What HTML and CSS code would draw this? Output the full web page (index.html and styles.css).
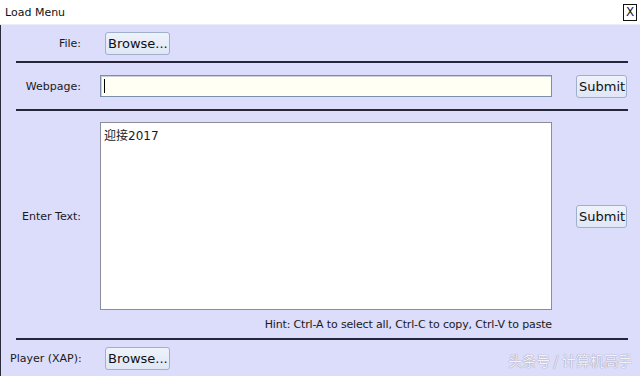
FILE: index.html
```html
<!DOCTYPE html>
<html lang="en">
<head>
    <meta charset="UTF-8">
    <title>Load Menu</title>
    <link rel="stylesheet" href="styles.css">
</head>
<body>
    <div class="window">
        <div class="title-bar">
            <span class="title">Load Menu</span>
            <span class="close-btn">X</span>
        </div>
        <div class="menu-body">
            <div class="row row-file">
                <label class="row-label">File:</label>
                <div class="row-field"><button class="btn browse">Browse...</button></div>
            </div>
            <div class="sep"></div>
            <div class="row row-web">
                <label class="row-label">Webpage:</label>
                <div class="row-field"><div class="text-field"><span class="caret"></span></div></div>
                <div class="row-action"><button class="btn">Submit</button></div>
            </div>
            <div class="sep"></div>
            <div class="row row-text">
                <label class="row-label">Enter Text:</label>
                <div class="row-field"><div class="text-area">迎接2017</div></div>
                <div class="row-action"><button class="btn">Submit</button></div>
                <div class="hint">Hint: Ctrl-A to select all, Ctrl-C to copy, Ctrl-V to paste</div>
            </div>
            <div class="sep"></div>
            <div class="row row-player">
                <label class="row-label left">Player (XAP):</label>
                <div class="row-field"><button class="btn browse">Browse...</button></div>
            </div>
            <div class="watermark">头条号 / 计算机高手</div>
        </div>
    </div>
</body>
</html>
```

FILE: styles.css
```css
body {
    margin: 0;
    font-family: "DejaVu Sans", Verdana, "Noto Sans CJK SC", sans-serif;
    font-size: 12px;
    color: #1a1a1a;
    background-color: #fff;
}
.window {
    width: 640px;
    height: 376px;
    display: flex;
    flex-direction: column;
    overflow: hidden;
}
.title-bar {
    flex-shrink: 0;
    height: 24px;
    background-color: #fff;
    border-bottom: 1px solid #ececf6;
    display: flex;
    align-items: center;
    justify-content: space-between;
    padding: 0 3px 0 5px;
}
.title {
    font-size: 11px;
    color: #111;
}
.close-btn {
    width: 12px;
    height: 15px;
    border: 1px solid #111;
    font-size: 12px;
    line-height: 15px;
    text-align: center;
    margin-top: 1px;
}
.menu-body {
    flex: 1;
    position: relative;
    background-color: #dcdcfb;
    border-left: 1px solid #2a2a3a;
}
.row {
    display: grid;
    grid-template-columns: 99px 452px 1fr;
    align-items: center;
}
.row-label {
    text-align: right;
    padding-right: 19px;
    font-size: 11px;
}
.row-label.left {
    text-align: left;
    padding-left: 9px;
    padding-right: 0;
}
.row-file {
    height: 36px;
}
.row-web {
    height: 46px;
}
.row-player {
    height: 36px;
}
.btn {
    font-family: inherit;
    font-size: 13px;
    color: #111;
    height: 23px;
    padding: 0 2px;
    background: linear-gradient(#eef2fb, #dfe6f5);
    border: 1px solid #9fb0cc;
    border-radius: 3px;
}
.browse {
    margin-left: 5px;
    width: 65px;
}
.row-action {
    padding-left: 24px;
}
.row-action .btn {
    width: 51px;
}
.text-field {
    height: 20px;
    background-color: #fffff4;
    border: 1px solid #7d8fa8;
    box-shadow: inset 1px 1px 0 #c8d0dc;
    display: flex;
    align-items: center;
    padding-left: 3px;
}
.caret {
    width: 1px;
    height: 14px;
    background-color: #000;
}
.row-text {
    padding-top: 11px;
    grid-template-rows: 188px 28px;
}
.text-area {
    background-color: #fff;
    border: 1px solid #8d8d9a;
    padding: 3px 3px;
    box-sizing: border-box;
    height: 188px;
    font-family: "DejaVu Sans", "Noto Sans CJK SC", sans-serif;
    font-size: 12px;
}
.hint {
    grid-column: 2;
    text-align: right;
    font-size: 11px;
    letter-spacing: -0.15px;
    padding-top: 1px;
}
.sep {
    height: 2px;
    background-color: #26263a;
    margin: 0 12px 0 15px;
}
.watermark {
    position: absolute;
    right: 8px;
    bottom: 6px;
    font-family: "Noto Sans CJK SC", sans-serif;
    font-size: 14px;
    color: #f2f2f8;
    text-shadow: 0 0 1px #9a9aa8, 0 0 1px #9a9aa8;
}
```
